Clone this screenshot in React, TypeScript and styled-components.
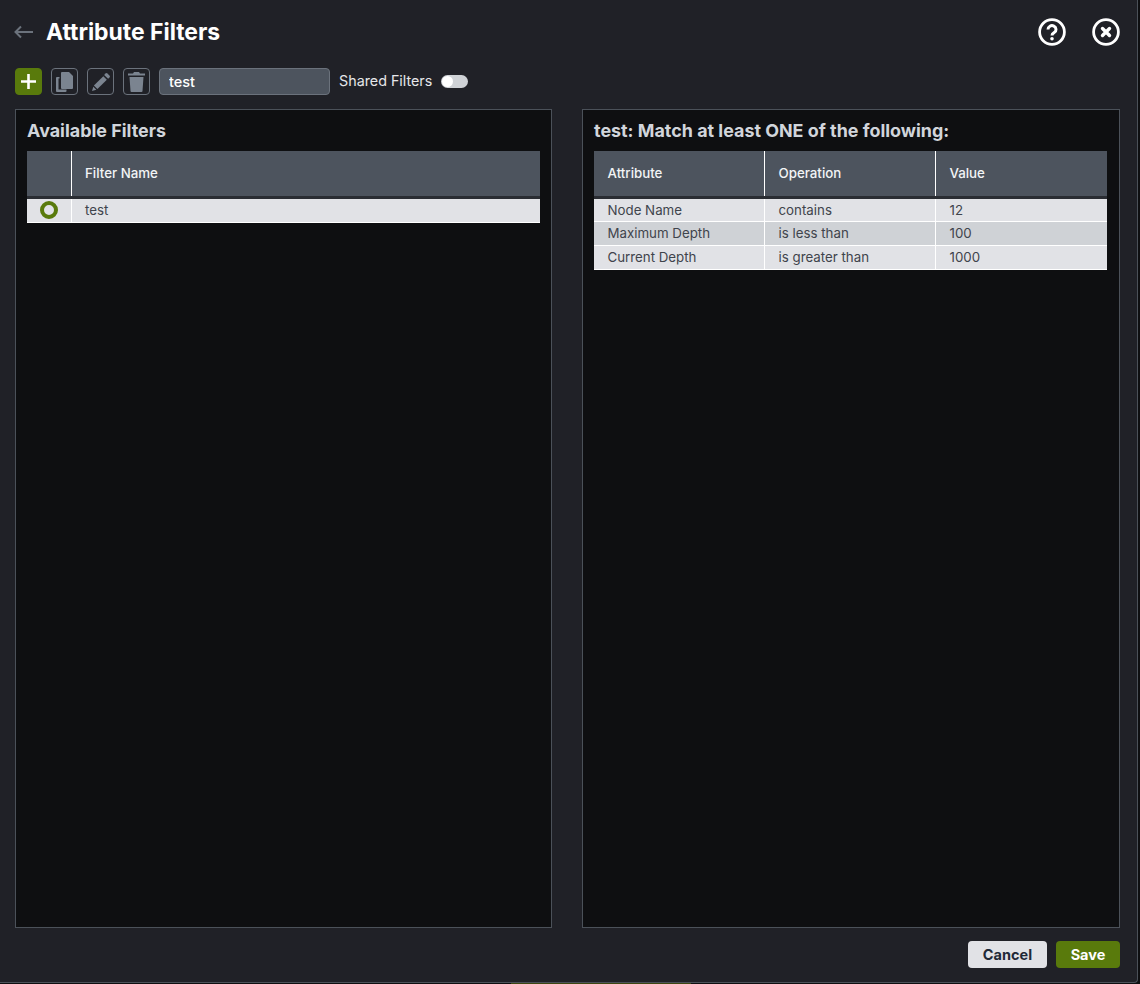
import React from "react";
import styled, { createGlobalStyle } from "styled-components";

const Global = createGlobalStyle`
  html, body { margin: 0; padding: 0; background: #0e0f11; }
  * { box-sizing: border-box; }
`;

const Modal = styled.div`
  width: 1138px;
  height: 983px;
  background: #202127;
  border-right: 1px solid #4b5159;
  border-bottom: 1px solid #4b5159;
  border-bottom-right-radius: 4px;
  padding: 0 17px 0 15px;
  display: flex;
  flex-direction: column;
  font-family: Inter, "Noto Sans", sans-serif;
`;

const Header = styled.div`
  height: 64px;
  display: flex;
  align-items: center;
  justify-content: space-between;
`;

const TitleGroup = styled.div`
  display: flex;
  align-items: center;
  gap: 13px;
  margin-left: -1px;
`;

const Title = styled.h1`
  margin: 0 0 1px;
  font-size: 22.9px;
  font-weight: 700;
  color: #fff;
`;

const HeaderActions = styled.div`
  display: flex;
  gap: 26px;
  align-items: center;
`;

const Toolbar = styled.div`
  height: 27px;
  margin-top: 4px;
  display: flex;
  align-items: center;
  gap: 9px;
`;

const IconButton = styled.button<{ $primary?: boolean }>`
  width: 27px;
  height: 27px;
  padding: 0;
  display: flex;
  align-items: center;
  justify-content: center;
  border-radius: 4px;
  background: ${(p) => (p.$primary ? "#597a0c" : "transparent")};
  border: 1px solid ${(p) => (p.$primary ? "#597a0c" : "#6b727c")};
`;

const NameInput = styled.input`
  width: 171px;
  height: 27px;
  padding: 0 9px;
  border-radius: 4px;
  border: 1px solid #6b727c;
  background: #4d545e;
  color: #fff;
  font: 500 14.5px Inter, sans-serif;
  outline: none;
`;

const SwitchLabel = styled.span`
  font-size: 14.3px;
  color: #e6e7ea;
  margin-bottom: 2px;
`;

const SwitchTrack = styled.span`
  width: 27px;
  height: 13px;
  border-radius: 7px;
  background: #cfd2d6;
  display: flex;
  align-items: center;
  padding-left: 1px;
`;

const SwitchThumb = styled.span`
  width: 11px;
  height: 11px;
  border-radius: 50%;
  background: #fff;
`;

const Panels = styled.div`
  margin-top: 14px;
  height: 819px;
  display: grid;
  grid-template-columns: 537px 538px;
  gap: 30px;
`;

const Panel = styled.section`
  background: #0e0f11;
  border: 1px solid #4b5159;
  padding: 11px 11px 0;
`;

const PanelTitle = styled.h2`
  margin: 0 0 10px;
  height: 20px;
  line-height: 20px;
  font-size: 17.9px;
  font-weight: 700;
  color: #d1d5db;
`;

const Grid = styled.table<{ $narrow?: boolean }>`
  width: ${(p) => (p.$narrow ? "513px" : "100%")};
  border-collapse: collapse;
  table-layout: fixed;
  font-size: 13.3px;
`;

const HeadCell = styled.th<{ $w?: number }>`
  width: ${(p) => (p.$w ? `${p.$w}px` : "auto")};
  height: 46px;
  padding: 0 13.5px;
  background: #4d545e;
  color: #f3f4f6;
  font-weight: 500;
  text-align: left;
  border-right: 1px solid #fff;
  border-bottom: 3px solid #2a2d33;
  &:last-child { border-right: none; }
`;

const Row = styled.tr<{ $alt?: boolean }>`
  background: ${(p) => (p.$alt ? "#cfd2d6" : "#e1e2e6")};
`;

const Cell = styled.td`
  height: 24px;
  padding: 0 13.5px;
  color: #3f444c;
  border-right: 1px solid #fff;
  border-bottom: 1px solid #fff;
  &:last-child { border-right: none; }
`;

const RadioCell = styled(Cell)`
  height: 25px;
  padding: 0;
  text-align: center;
`;

const Radio = styled.span`
  display: inline-block;
  vertical-align: middle;
  width: 18px;
  height: 18px;
  border-radius: 50%;
  border: 4px solid #597a0c;
  background: #e1e2e6;
`;

const Footer = styled.div`
  flex: 1;
  display: flex;
  justify-content: flex-end;
  align-items: center;
  gap: 9px;
  padding-bottom: 1px;
`;

const FooterButton = styled.button<{ $primary?: boolean }>`
  height: 27px;
  width: ${(p) => (p.$primary ? 64 : 79)}px;
  border: none;
  border-radius: 4px;
  font: 700 14.5px Inter, sans-serif;
  color: ${(p) => (p.$primary ? "#fff" : "#1f2937")};
  background: ${(p) => (p.$primary ? "#597a0c" : "#e1e2e6")};
`;

const PageEdge = styled.div`
  height: 1px;
  margin-left: 511px;
  width: 180px;
  background: #3d4712;
`;

const ICON = "#7b8490";

export default function App() {
  return (
    <>
      <Global />
      <Modal>
        <Header>
          <TitleGroup>
            <svg width="19" height="14" viewBox="0 0 19 14" fill="none" stroke="#6b727c" strokeWidth="2">
              <path d="M19 7H1.500M7 1.500L1.500 7 7 12.500" />
            </svg>
            <Title>Attribute Filters</Title>
          </TitleGroup>
          <HeaderActions>
            <svg width="28" height="28" viewBox="0 0 28 28" fill="none" stroke="#fff">
              <circle cx="14" cy="14" r="12.4" strokeWidth="2.800" />
              <path d="M10 11.500a4 3.800 0 1 1 6.200 3.100c-1.300.9-2.200 1.400-2.200 2.900" strokeWidth="3" />
              <circle cx="14" cy="20.800" r="1.800" fill="#fff" stroke="none" />
            </svg>
            <svg width="28" height="28" viewBox="0 0 28 28" fill="none" stroke="#fff">
              <circle cx="14" cy="14" r="12.4" strokeWidth="2.800" />
              <path d="M10.500 10.500l7 7M17.500 10.500l-7 7" strokeWidth="3.400" strokeLinecap="round" />
            </svg>
          </HeaderActions>
        </Header>
        <Toolbar>
          <IconButton $primary aria-label="Add">
            <svg width="15" height="15" viewBox="0 0 15 15" fill="none" stroke="#fff" strokeWidth="2.600">
              <path d="M7.500 0v15M0 7.500h15" />
            </svg>
          </IconButton>
          <IconButton aria-label="Copy">
            <svg width="17" height="20" viewBox="0 0 17 20" fill={ICON}>
              <path d="M6 0h7l4 4v12a1 1 0 0 1-1 1H6a1 1 0 0 1-1-1V1a1 1 0 0 1 1-1z" />
              <path d="M3.500 6.500H2.500v11h8V19a1 1 0 0 1-1 1H1a1 1 0 0 1-1-1V6a1 1 0 0 1 1-1h2.500z" />
            </svg>
          </IconButton>
          <IconButton aria-label="Edit">
            <svg width="18" height="18" viewBox="0 0 20 20" fill={ICON}>
              <path d="M15 .6a1.500 1.500 0 0 1 2.100 0l2.300 2.300a1.500 1.500 0 0 1 0 2.100l-1.500 1.500-4.400-4.400z" />
              <path d="M12.600 3.500l3.900 3.900L6 17.900 2.100 14z" />
              <path d="M1.500 15.200l3.300 3.300L0 20z" />
            </svg>
          </IconButton>
          <IconButton aria-label="Delete">
            <svg width="17" height="20" viewBox="0 0 17 20" fill={ICON}>
              <path d="M6 0h5l1 1.500h5V3.500H0V1.500h5z" />
              <path d="M1.500 5h14l-1 14a1 1 0 0 1-1 1h-10a1 1 0 0 1-1-1z" />
            </svg>
          </IconButton>
          <NameInput defaultValue="test" />
          <SwitchLabel>Shared Filters</SwitchLabel>
          <SwitchTrack><SwitchThumb /></SwitchTrack>
        </Toolbar>
        <Panels>
          <Panel>
            <PanelTitle>Available Filters</PanelTitle>
            <Grid>
              <thead>
                <tr>
                  <HeadCell $w={44} />
                  <HeadCell>Filter Name</HeadCell>
                </tr>
              </thead>
              <tbody>
                <Row>
                  <RadioCell><Radio /></RadioCell>
                  <Cell>test</Cell>
                </Row>
              </tbody>
            </Grid>
          </Panel>
          <Panel>
            <PanelTitle>test: Match at least ONE of the following:</PanelTitle>
            <Grid $narrow>
              <thead>
                <tr>
                  <HeadCell $w={170.5}>Attribute</HeadCell>
                  <HeadCell $w={171}>Operation</HeadCell>
                  <HeadCell>Value</HeadCell>
                </tr>
              </thead>
              <tbody>
                <Row><Cell>Node Name</Cell><Cell>contains</Cell><Cell>12</Cell></Row>
                <Row $alt><Cell>Maximum Depth</Cell><Cell>is less than</Cell><Cell>100</Cell></Row>
                <Row><Cell>Current Depth</Cell><Cell>is greater than</Cell><Cell>1000</Cell></Row>
              </tbody>
            </Grid>
          </Panel>
        </Panels>
        <Footer>
          <FooterButton>Cancel</FooterButton>
          <FooterButton $primary>Save</FooterButton>
        </Footer>
      </Modal>
      <PageEdge />
    </>
  );
}
